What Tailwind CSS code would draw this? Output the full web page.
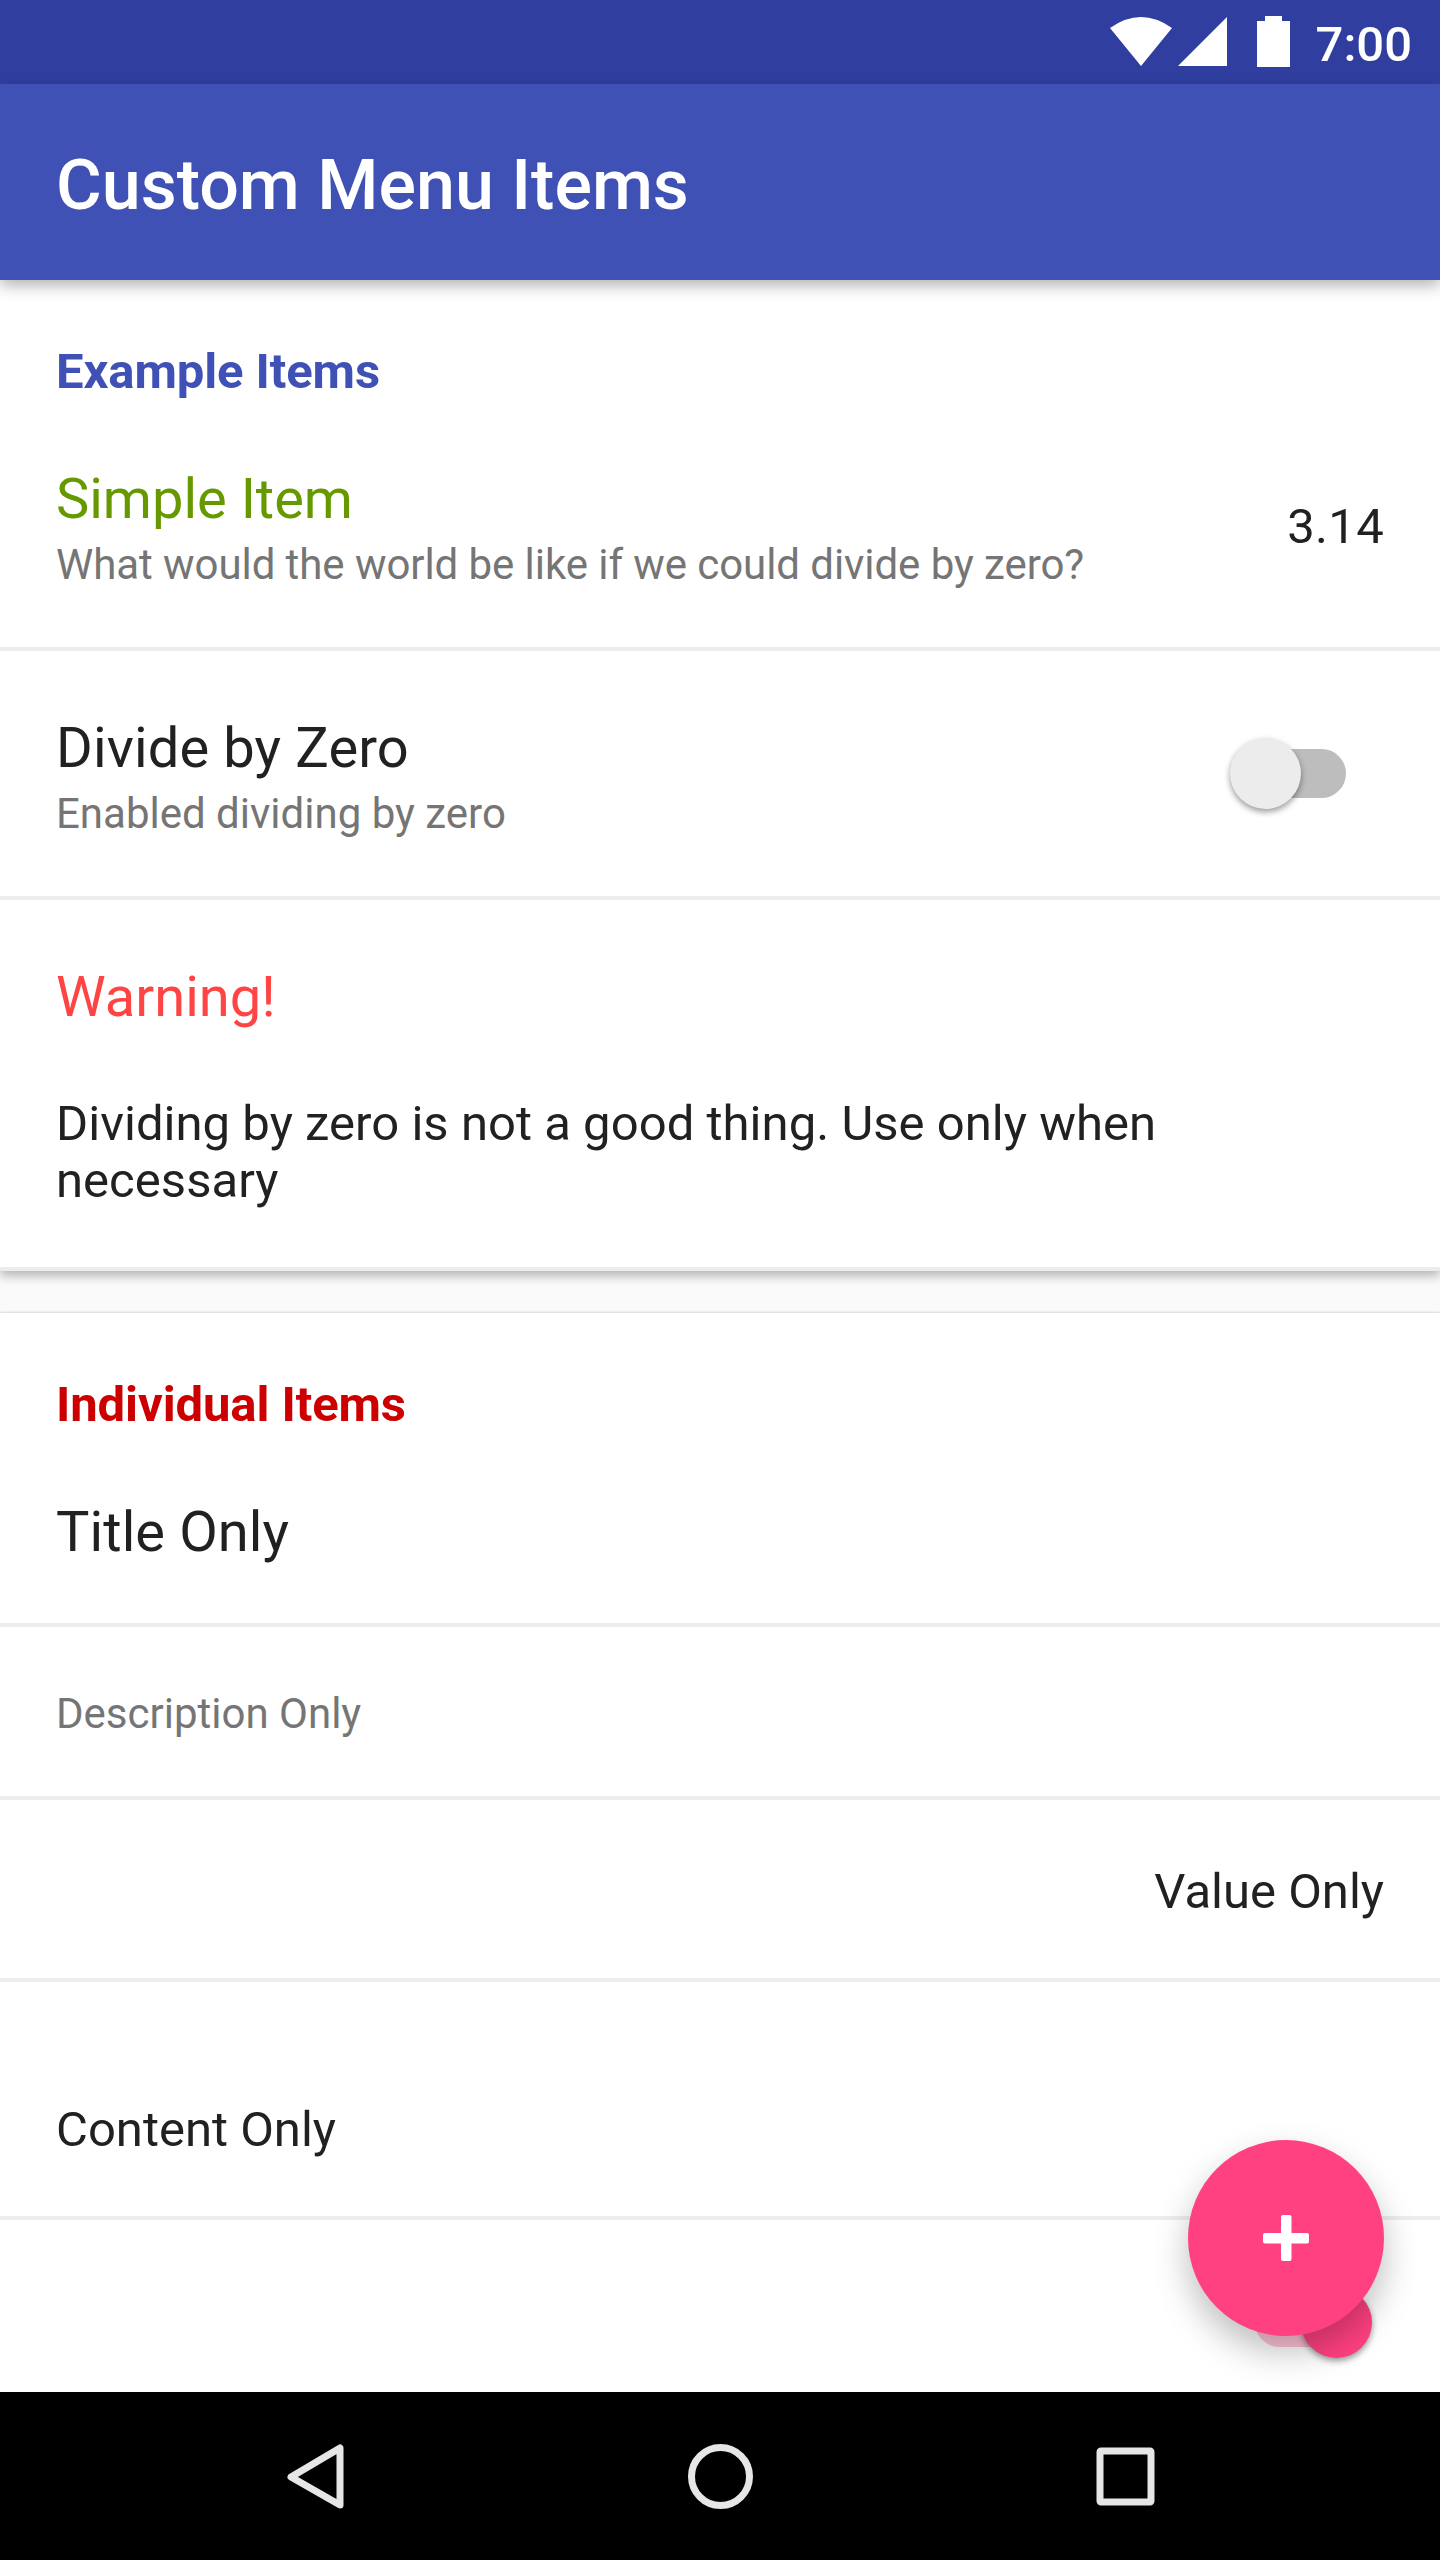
<!DOCTYPE html>
<html lang="en"><head><meta charset="utf-8"><title>Custom Menu Items</title>
<script src="https://cdn.jsdelivr.net/npm/@tailwindcss/browser@4"></script></head>
<body class="bg-[#fafafa] font-['Roboto',sans-serif] text-[#212121]">
<div class="relative flex h-[2560px] w-[1440px] flex-col overflow-hidden">
  <div class="flex h-[84px] shrink-0 items-center justify-end bg-[#303f9f] pr-[28px] text-white">
    <svg class="mr-[26px] h-[84px] w-[180px]" viewBox="1110 0 180 84" fill="#fff"><path d="M1110 28Q1141 6 1172 28L1141 66ZM1227 17V66H1178ZM1257 21h8v-5h17v5h8v46h-33z"/></svg>
    <span class="pt-[5px] text-[49px] leading-[84px] font-medium">7:00</span>
  </div>
  <header class="relative z-10 h-[196px] shrink-0 bg-[#3f51b5] px-[56px] pt-[60px] text-[70px] leading-[82px] font-medium text-white shadow-[0_6px_14px_rgba(0,0,0,.29)]">Custom Menu Items</header>

  <section class="flex shrink-0 flex-col bg-white shadow-[0_4px_11px_rgba(0,0,0,.32)]">
    <h2 class="px-[56px] pt-[63px] text-[49px] leading-[57px] font-bold tracking-[-0.1px] text-[#3f51b5]">Example Items</h2>
    <div class="flex h-[251px] items-start justify-between border-b-4 border-[#ededed] px-[56px] pt-[66px]">
      <div><p class="text-[56px] leading-[66px] text-[#669900]">Simple Item</p><p class="pt-[8px] text-[42px] leading-[49px] tracking-[-0.07px] text-[#757575]">What would the world be like if we could divide by zero?</p></div>
      <span class="pt-[32px] text-[49px] leading-[57px] tracking-[0.3px]">3.14</span>
    </div>
    <div class="flex h-[249px] items-start justify-between border-b-4 border-[#ededed] pt-[64px] pr-[94px] pl-[56px]">
      <div><p class="text-[56px] leading-[66px] tracking-[0.15px]">Divide by Zero</p><p class="pt-[8px] text-[42px] leading-[49px] text-[#757575]">Enabled dividing by zero</p></div>
      <div class="flex h-[117px] w-[116px] items-center"><div class="ml-[11px] flex h-[49px] w-[105px] items-center rounded-full bg-[#bdbdbd]"><div class="-ml-[11px] size-[71px] rounded-full bg-[#ececec] shadow-[0_3px_6px_rgba(0,0,0,.4)]"></div></div></div>
    </div>
    <div class="h-[371px] border-b-4 border-[#ededed] px-[56px] pt-[64px]">
      <p class="text-[56px] leading-[66px] text-[#ff4444]">Warning!</p>
      <p class="w-[1160px] pt-[65px] text-[49px] leading-[57px] tracking-[0.04px]">Dividing by zero is not a good thing. Use only when necessary</p>
    </div>
  </section>

  <section class="mt-[42px] flex flex-1 flex-col bg-white shadow-[0_0_3px_rgba(0,0,0,.25)]">
    <h2 class="px-[56px] pt-[63px] text-[49px] leading-[57px] font-bold tracking-[-0.1px] text-[#cc0000]">Individual Items</h2>
    <div class="h-[194px] border-b-4 border-[#ededed] px-[56px] pt-[66px] text-[56px] leading-[66px] tracking-[0.1px]">Title Only</div>
    <div class="h-[173px] border-b-4 border-[#ededed] px-[56px] pt-[62px] text-[42px] leading-[49px] text-[#757575]">Description Only</div>
    <div class="h-[182px] border-b-4 border-[#ededed] px-[56px] pt-[63px] text-right text-[49px] leading-[57px]">Value Only</div>
    <div class="h-[238px] border-b-4 border-[#ededed] px-[56px] pt-[119px] text-[49px] leading-[57px]">Content Only</div>
    <div class="flex flex-1 justify-end pt-[78px] pr-[68px]"><div class="flex h-[49px] w-[117px] items-center"><div class="flex h-[49px] w-[105px] items-center rounded-full bg-[#ff4081]/30"><div class="ml-[46px] size-[71px] shrink-0 rounded-full bg-[#ff4081] shadow-[0_3px_6px_rgba(0,0,0,.4)]"></div></div></div></div>
  </section>

  <nav class="relative z-10 h-[168px] shrink-0 bg-black">
    <svg class="h-[168px] w-full" viewBox="0 2392 1440 168" fill="none" stroke="#e6e6e6" stroke-width="7" stroke-linejoin="round"><path d="M340 2448V2505L291 2477Z"/><circle cx="720.5" cy="2476.5" r="29"/><rect x="1100" y="2451" width="51" height="51" rx="1"/></svg>
  </nav>
  <button class="absolute top-[2140px] left-[1188px] flex size-[196px] items-center justify-center rounded-full bg-[#ff4081] shadow-[0_16px_34px_rgba(0,0,0,.26)]" aria-label="Add">
    <svg class="size-[46px]" viewBox="0 0 46 46" fill="#fff"><rect x="0" y="18" width="46" height="10.5" rx="2"/><rect x="18" y="0" width="10.5" height="46" rx="2"/></svg>
  </button>
</div></body></html>
